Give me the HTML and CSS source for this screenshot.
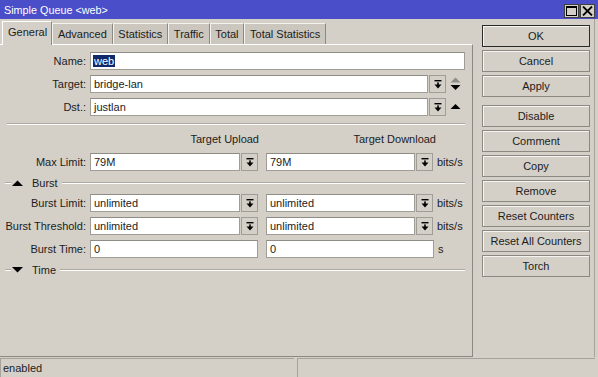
FILE: index.html
```html
<!DOCTYPE html>
<html lang="en">
<head>
    <meta charset="UTF-8">
    <title>Simple Queue &lt;web&gt;</title>
    <link rel="stylesheet" href="styles.css">
</head>
<body>
<div class="window">

    <!-- Title bar -->
    <div class="titlebar">
        <span class="title">Simple Queue &lt;web&gt;</span>
        <div class="tb-btns">
            <span class="tb-btn">
                <svg width="11" height="10" viewBox="0 0 11 10"><rect x="0.5" y="0.5" width="10" height="9" fill="none" stroke="#000"/><rect x="0.5" y="0.5" width="10" height="1.5" fill="#000"/></svg>
            </span>
            <span class="tb-btn">
                <svg width="11" height="10" viewBox="0 0 11 10"><path d="M1 0.5 L10 9.5 M10 0.5 L1 9.5" stroke="#000" stroke-width="1.8"/></svg>
            </span>
        </div>
    </div>

    <div class="main">
        <div class="left">
            <!-- Tabs -->
            <div class="tabs">
                <span class="tab active">General</span>
                <span class="tab">Advanced</span>
                <span class="tab">Statistics</span>
                <span class="tab">Traffic</span>
                <span class="tab">Total</span>
                <span class="tab">Total Statistics</span>
            </div>

            <!-- General panel -->
            <div class="panel">
                <div class="row">
                    <span class="lbl">Name:</span>
                    <div class="field name"><span class="sel">web</span></div>
                </div>
                <div class="row">
                    <span class="lbl">Target:</span>
                    <div class="field wide">bridge-lan</div>
                    <span class="drop"><svg width="8" height="9" viewBox="0 0 8 9"><rect x="0.5" y="0" width="7" height="1.4"/><rect x="3.2" y="2.4" width="1.6" height="2.6"/><polygon points="0.5,4.6 7.5,4.6 4,8.6"/></svg></span>
                    <span class="arrows">
                        <svg width="11" height="14" viewBox="0 0 11 14"><polygon points="0.5,5.5 10.5,5.5 5.5,0.5" fill="#8e8c88"/><polygon points="0.5,8 10.5,8 5.5,13" fill="#000"/></svg>
                    </span>
                </div>
                <div class="row">
                    <span class="lbl">Dst.:</span>
                    <div class="field wide">justlan</div>
                    <span class="drop"><svg width="8" height="9" viewBox="0 0 8 9"><rect x="0.5" y="0" width="7" height="1.4"/><rect x="3.2" y="2.4" width="1.6" height="2.6"/><polygon points="0.5,4.6 7.5,4.6 4,8.6"/></svg></span>
                    <span class="arrows">
                        <svg width="11" height="14" viewBox="0 0 11 14"><polygon points="0.5,9 10.5,9 5.5,4" fill="#000"/></svg>
                    </span>
                </div>

                <div class="separator"></div>

                <div class="row heads">
                    <span class="lbl"></span>
                    <span class="head up">Target Upload</span>
                    <span class="head down">Target Download</span>
                </div>

                <div class="row">
                    <span class="lbl">Max Limit:</span>
                    <div class="field half">79M</div>
                    <span class="drop"><svg width="8" height="9" viewBox="0 0 8 9"><rect x="0.5" y="0" width="7" height="1.4"/><rect x="3.2" y="2.4" width="1.6" height="2.6"/><polygon points="0.5,4.6 7.5,4.6 4,8.6"/></svg></span>
                    <div class="field half second">79M</div>
                    <span class="drop"><svg width="8" height="9" viewBox="0 0 8 9"><rect x="0.5" y="0" width="7" height="1.4"/><rect x="3.2" y="2.4" width="1.6" height="2.6"/><polygon points="0.5,4.6 7.5,4.6 4,8.6"/></svg></span>
                    <span class="unit">bits/s</span>
                </div>

                <div class="group">
                    <span class="g-line short"></span>
                    <svg class="g-arrow" width="11" height="6" viewBox="0 0 11 6"><polygon points="0,6 11,6 5.5,0.5"/></svg>
                    <span class="g-text">Burst</span>
                    <span class="g-line"></span>
                </div>

                <div class="row">
                    <span class="lbl">Burst Limit:</span>
                    <div class="field half">unlimited</div>
                    <span class="drop"><svg width="8" height="9" viewBox="0 0 8 9"><rect x="0.5" y="0" width="7" height="1.4"/><rect x="3.2" y="2.4" width="1.6" height="2.6"/><polygon points="0.5,4.6 7.5,4.6 4,8.6"/></svg></span>
                    <div class="field half second">unlimited</div>
                    <span class="drop"><svg width="8" height="9" viewBox="0 0 8 9"><rect x="0.5" y="0" width="7" height="1.4"/><rect x="3.2" y="2.4" width="1.6" height="2.6"/><polygon points="0.5,4.6 7.5,4.6 4,8.6"/></svg></span>
                    <span class="unit">bits/s</span>
                </div>
                <div class="row">
                    <span class="lbl">Burst Threshold:</span>
                    <div class="field half">unlimited</div>
                    <span class="drop"><svg width="8" height="9" viewBox="0 0 8 9"><rect x="0.5" y="0" width="7" height="1.4"/><rect x="3.2" y="2.4" width="1.6" height="2.6"/><polygon points="0.5,4.6 7.5,4.6 4,8.6"/></svg></span>
                    <div class="field half second">unlimited</div>
                    <span class="drop"><svg width="8" height="9" viewBox="0 0 8 9"><rect x="0.5" y="0" width="7" height="1.4"/><rect x="3.2" y="2.4" width="1.6" height="2.6"/><polygon points="0.5,4.6 7.5,4.6 4,8.6"/></svg></span>
                    <span class="unit">bits/s</span>
                </div>
                <div class="row">
                    <span class="lbl">Burst Time:</span>
                    <div class="field time">0</div>
                    <div class="field time second">0</div>
                    <span class="unit">s</span>
                </div>

                <div class="group">
                    <span class="g-line short"></span>
                    <svg class="g-arrow" width="11" height="6" viewBox="0 0 11 6"><polygon points="0,0 11,0 5.5,5.5"/></svg>
                    <span class="g-text">Time</span>
                    <span class="g-line"></span>
                </div>
            </div>
        </div>

        <!-- Buttons -->
        <div class="buttons">
            <span class="btn default">OK</span>
            <span class="btn">Cancel</span>
            <span class="btn">Apply</span>
            <span class="btn spaced">Disable</span>
            <span class="btn">Comment</span>
            <span class="btn">Copy</span>
            <span class="btn">Remove</span>
            <span class="btn">Reset Counters</span>
            <span class="btn">Reset All Counters</span>
            <span class="btn">Torch</span>
        </div>
    </div>

    <!-- Status bar -->
    <div class="status">
        <span class="st-field first">enabled</span>
        <span class="st-field"></span>
    </div>
</div>
</body>
</html>
```

FILE: styles.css
```css
body {
    margin: 0;
    padding: 0;
    background-color: #d4d0c8;
    font-family: "Liberation Sans", Arial, sans-serif;
    font-size: 11px;
    color: #1c1c1c;
}
.window {
    width: 598px;
    height: 377px;
    display: flex;
    flex-direction: column;
    overflow: hidden;
}
.titlebar {
    height: 19px;
    background-color: #4a4ec9;
    color: white;
    display: flex;
    align-items: center;
    justify-content: space-between;
    padding: 0 3px 0 4px;
    flex-shrink: 0;
}
.title {
    font-size: 10.8px;
}
.tb-btns {
    display: flex;
    gap: 1px;
    margin-top: 3px;
}
.tb-btn {
    width: 13px;
    height: 12px;
    background-color: #d4d0c8;
    border: 1px solid #404040;
    display: flex;
    align-items: center;
    justify-content: center;
}

/* main area */
.main {
    display: flex;
    flex: 1;
    border-right: 1px solid #a7a39b;
    margin-right: 3px;
}
.left {
    width: 473px;
    display: flex;
    flex-direction: column;
}
.tabs {
    height: 25px;
    display: flex;
    align-items: flex-end;
    padding-left: 2px;
    box-sizing: border-box;
}
.tab {
    height: 20px;
    line-height: 20px;
    padding: 0 4.75px;
    background-color: #cbc7bf;
    border-top: 1px solid #f4f2ee;
    border-left: 1px solid #f4f2ee;
    border-right: 1px solid #8c8982;
    font-size: 11px;
    color: #1c1c1c;
}
.tab.active {
    height: 23px;
    line-height: 21px;
    background-color: #d4d0c8;
    padding: 0 4px 0 5px;
    margin-bottom: -1px;
    position: relative;
    border-left: 1px solid #ffffff;
    border-top: 1px solid #ffffff;
}
.panel {
    flex: 1;
    border-top: 1px solid #ffffff;
    border-right: 1px solid #8c8982;
    border-bottom: 1px solid #8c8982;
    padding: 7px 7px 0 0;
    display: flex;
    flex-direction: column;
    gap: 5px;
}
.row {
    display: flex;
    align-items: center;
    height: 18px;
}
.lbl {
    width: 86px;
    margin-right: 4px;
    text-align: right;
    flex-shrink: 0;
    white-space: nowrap;
}
.field {
    height: 18px;
    box-sizing: border-box;
    background-color: white;
    border: 1px solid #a09d97;
    border-top-color: #8f8c86;
    padding: 0 3px;
    line-height: 16px;
    white-space: nowrap;
}
.field.name {
    width: 376px;
}
.field.wide {
    width: 339px;
}
.field.half {
    width: 150px;
}
.field.half.second {
    width: 149px;
}
.field.time {
    width: 168px;
}
.field.second {
    margin-left: 8px;
}
.sel {
    background-color: #0f2a6b;
    color: white;
    padding: 0 1px;
    margin-left: -1px;
}
.drop {
    width: 17px;
    height: 18px;
    box-sizing: border-box;
    margin-left: 1px;
    border: 1px solid #a09d97;
    background-color: #d4d0c8;
    display: flex;
    align-items: center;
    justify-content: center;
}
.arrows {
    width: 19px;
    display: flex;
    justify-content: center;
    align-items: center;
}
.unit {
    margin-left: 4px;
}
.separator {
    height: 0;
    margin: 2px 0 2px 7px;
    border-top: 1px solid #aeaaa2;
    border-bottom: 1px solid #ffffff;
}
.row.heads {
    height: 14px;
    margin-bottom: 2px;
}
.head.up {
    width: 169px;
    text-align: right;
}
.head.down {
    width: 177px;
    text-align: right;
}
.group {
    height: 18px;
    display: flex;
    align-items: center;
    margin-top: -2px;
    margin-bottom: -3px;
}
.g-line {
    flex: 1;
    height: 0;
    border-top: 1px solid #aeaaa2;
    border-bottom: 1px solid #ffffff;
    margin-left: 4px;
}
.g-line.short {
    flex: none;
    width: 6px;
    margin-left: 5px;
}
.g-arrow {
    margin-left: 1px;
}
.g-text {
    margin-left: 9px;
}

/* right buttons */
.buttons {
    display: flex;
    flex-direction: column;
    gap: 3px;
    padding: 6px 0 0 9px;
}
.btn {
    width: 108px;
    height: 22px;
    box-sizing: border-box;
    border: 1px solid #8c8982;
    box-shadow: inset 1px 1px 0 #f6f4f0;
    background-color: #d4d0c8;
    text-align: center;
    line-height: 20px;
    color: #1c1c1c;
}
.btn.default {
    border-color: #2a2a2a;
}
.btn.spaced {
    margin-top: 5px;
}

/* status bar */
.status {
    height: 20px;
    display: flex;
    gap: 3px;
    padding: 1px 3px 0 0;
    box-sizing: border-box;
    flex-shrink: 0;
}
.st-field {
    flex: 1;
    border-top: 1px solid #a7a39b;
    border-left: 1px solid #a7a39b;
    line-height: 18px;
    padding-left: 2px;
}
.st-field.first {
    flex: none;
    width: 291px;
}
```
